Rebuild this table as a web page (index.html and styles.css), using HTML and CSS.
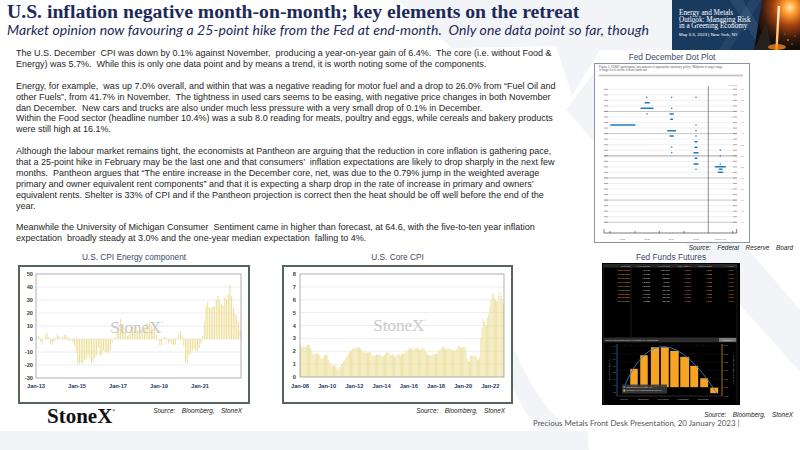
FILE: index.html
```html
<!DOCTYPE html>
<html lang="en">
<head>
<meta charset="utf-8">
<title>U.S. inflation negative month-on-month</title>
<link rel="stylesheet" href="styles.css">
</head>
<body>
<div class="slide">
  <svg class="bg" width="800" height="450" viewBox="0 0 800 450" aria-hidden="true">
    <g class="bg-shape">
      <polygon points="398,0 672,0 672,50 600,50 572,96 556,46 452,48"/>
      <polygon points="566,110 596,70 800,310 800,372"/>
      <path d="M0 431 H588 V450 H0 Z"/>
      <path d="M500 300 C512 362 542 412 590 450 L556 450 C516 410 496 360 490 300 Z"/>
    </g>
  </svg>

  <header class="top">
    <div class="titles">
      <h1 class="title">U.S. inflation negative month-on-month; key elements on the retreat</h1>
      <p class="subtitle">Market opinion now favouring a 25-point hike from the Fed at end-month.&nbsp; Only one data point so far, though</p>
    </div>
    <div class="banner">
      <div class="banner-text">
        <p class="banner-head">Energy and Metals<br>Outlook: Managing Risk<br>in a Greening Economy</p>
        <p class="banner-date">May 3-5, 2023 | New York, NY</p>
      </div>
      <svg class="banner-art" width="48" height="50" viewBox="0 0 48 50" aria-hidden="true">
        <defs>
          <radialGradient id="fire" cx="0.78" cy="0.15" r="0.8">
            <stop offset="0" stop-color="#ffe6a8"/>
            <stop offset="0.18" stop-color="#ff9c30"/>
            <stop offset="0.45" stop-color="#a5420f"/>
            <stop offset="0.75" stop-color="#3b1c10"/>
            <stop offset="1" stop-color="#140c09"/>
          </radialGradient>
          <linearGradient id="pour" x1="0" y1="0" x2="0" y2="1">
            <stop offset="0" stop-color="#fff7dc"/>
            <stop offset="1" stop-color="#ffb040"/>
          </linearGradient>
        </defs>
        <polygon points="10,0 48,0 48,50 2,50" fill="url(#fire)"/>
        <polygon points="2,50 14,22 20,50" fill="#2a2522" opacity="0.8"/>
        <path d="M27 6 C26 20 25.5 32 24.5 50" stroke="url(#pour)" stroke-width="2.4" fill="none"/>
        <ellipse cx="25" cy="47" rx="9" ry="3" fill="#ff8c22" opacity="0.75"/>
        <circle cx="36" cy="40" r="0.8" fill="#ffb347"/>
        <circle cx="40" cy="44" r="0.6" fill="#ffcf70"/>
        <circle cx="33" cy="34" r="0.5" fill="#ff9a30"/>
        <circle cx="43" cy="36" r="0.6" fill="#ff8a20"/>
      </svg>
    </div>
  </header>

  <section class="middle">
    <div class="article">
<p class="para">The U.S. December  CPI was down by 0.1% against November,  producing a year-on-year gain of 6.4%.  The core (i.e. without Food &amp;
Energy) was 5.7%.  While this is only one data point and by means a trend, it is worth noting some of the components.</p>
<p class="para">Energy, for example,  was up 7.0% overall, and within that was a negative reading for motor fuel and a drop to 26.0% from “Fuel Oil and
other Fuels”, from 41.7% in November.  The tightness in used cars seems to be easing, with negative price changes in both November
dan December.  New cars and trucks are also under much less pressure with a very small drop of 0.1% in December.
Within the Food sector (headline number 10.4%) was a sub 8.0 reading for meats, poultry and eggs, while cereals and bakery products
were still high at 16.1%.</p>
<p class="para">Although the labour market remains tight, the economists at Pantheon are arguing that the reduction in core inflation is gathering pace,
that a 25-point hike in February may be the last one and that consumers’  inflation expectations are likely to drop sharply in the next few
months.  Pantheon argues that “The entire increase in the December core, net, was due to the 0.79% jump in the weighted average
primary and owner equivalent rent components” and that it is expecting a sharp drop in the rate of increase in primary and owners’
equivalent rents. Shelter is 33% of CPI and if the Pantheon projection is correct then the heat should be off well before the end of the
year.</p>
<p class="para">Meanwhile the University of Michigan Consumer  Sentiment came in higher than forecast, at 64.6, with the five-to-ten year inflation
expectation  broadly steady at 3.0% and the one-year median expectation  falling to 4%.</p>
    </div>

    <aside class="side">
      <h2 class="fig-title side-title">Fed December Dot Plot</h2>
      <div class="dot-box">
        <svg width="154" height="178" viewBox="595 64 154 178" aria-hidden="true">
          <text class="cap" x="599" y="67.6">Figure 2.  FOMC participants’ assessments of appropriate monetary policy:  Midpoint of target range</text>
          <text class="cap" x="599" y="71.4">or target level for the federal funds rate</text>
          <rect x="599" y="74.6" width="144" height="1.8" fill="#c4c4c4"/>
          <text class="cap-s" x="737" y="85.5" text-anchor="end">Percent</text>
          <g id="dot-grid"></g>
          <line class="vline" x1="708.3" x2="708.3" y1="86" y2="233"/>
          <line class="axis" x1="604" x2="736.7" y1="233" y2="233"/>
          <g class="axis">
            <line x1="604" x2="604" y1="229" y2="233"/>
            <line x1="610" x2="610" y1="231" y2="233"/>
            <line x1="635" x2="635" y1="231" y2="233"/>
            <line x1="659.3" x2="659.3" y1="231" y2="233"/>
            <line x1="684" x2="684" y1="231" y2="233"/>
            <line x1="732.7" x2="732.7" y1="231" y2="233"/>
            <line x1="736.7" x2="736.7" y1="229" y2="233"/>
          </g>
          <g class="cap-s" text-anchor="middle">
            <text x="622.5" y="240">2022</text>
            <text x="647.2" y="240">2023</text>
            <text x="671.7" y="240">2024</text>
            <text x="696.2" y="240">2025</text>
            <text x="720.5" y="240">Longer run</text>
          </g>
          <g class="dots">
            <rect x="645.9" y="96.5" width="1.6" height="1.6" rx="0.8"/>
            <rect x="670.9" y="96.5" width="1.6" height="1.6" rx="0.8"/>
            <rect x="695.2" y="96.5" width="1.6" height="1.6" rx="0.8"/>
            <rect x="644.3" y="101.9" width="5.7" height="1.6" rx="0.8"/>
            <rect x="640.3" y="107.5" width="13.4" height="1.6" rx="0.8"/>
            <rect x="670.9" y="107.5" width="1.6" height="1.6" rx="0.8"/>
            <rect x="646.2" y="113.2" width="1.6" height="1.6" rx="0.8"/>
            <rect x="669.3" y="113.2" width="4.7" height="1.6" rx="0.8"/>
            <rect x="670" y="118.5" width="3.3" height="1.6" rx="0.8"/>
            <rect x="610" y="124.2" width="25.7" height="1.6" rx="0.8"/>
            <rect x="695.2" y="124.2" width="1.6" height="1.6" rx="0.8"/>
            <rect x="667" y="129.9" width="9.3" height="1.6" rx="0.8"/>
            <rect x="695.2" y="129.9" width="1.6" height="1.6" rx="0.8"/>
            <rect x="669.3" y="135.2" width="4.7" height="1.6" rx="0.8"/>
            <rect x="695.2" y="135.2" width="1.6" height="1.6" rx="0.8"/>
            <rect x="694.3" y="140.9" width="3.4" height="1.6" rx="0.8"/>
            <rect x="670.9" y="146.5" width="1.6" height="1.6" rx="0.8"/>
            <rect x="694.3" y="146.5" width="3.4" height="1.6" rx="0.8"/>
            <rect x="719.5" y="149.2" width="1.6" height="1.6" rx="0.8"/>
            <rect x="670.9" y="151.9" width="1.6" height="1.6" rx="0.8"/>
            <rect x="693.3" y="151.9" width="5.4" height="1.6" rx="0.8"/>
            <rect x="719.5" y="155.2" width="1.6" height="1.6" rx="0.8"/>
            <rect x="694.3" y="157.5" width="3.4" height="1.6" rx="0.8"/>
            <rect x="693.3" y="163.2" width="5.4" height="1.6" rx="0.8"/>
            <rect x="719.5" y="163.2" width="1.6" height="1.6" rx="0.8"/>
            <rect x="714.7" y="165.9" width="11.3" height="1.6" rx="0.8"/>
            <rect x="695.2" y="168.5" width="1.6" height="1.6" rx="0.8"/>
            <rect x="718.7" y="168.5" width="4" height="1.6" rx="0.8"/>
            <rect x="717.7" y="171.5" width="5.6" height="1.6" rx="0.8"/>
          </g>
        </svg>
      </div>
      <p class="source">Source:  Federal  Reserve  Board</p>
    </aside>
  </section>

  <section class="charts">
    <figure class="chart chart-energy">
      <figcaption class="fig-title">U.S. CPI Energy component</figcaption>
      <div class="chart-box">
        <svg width="228" height="135" viewBox="20 267 228 135" aria-hidden="true">
          <g class="grid">
            <line x1="36" x2="241" y1="287" y2="287"/>
            <line x1="36" x2="241" y1="300" y2="300"/>
            <line x1="36" x2="241" y1="313" y2="313"/>
            <line x1="36" x2="241" y1="326" y2="326"/>
            <line x1="36" x2="241" y1="339" y2="339"/>
            <line x1="36" x2="241" y1="352" y2="352"/>
            <line x1="36" x2="241" y1="365" y2="365"/>
          </g>
          <g id="energy-bars" class="bars-energy"></g>
          <rect class="plot" x="36" y="274" width="205" height="104"/>
          <text class="wm" x="137" y="333" text-anchor="middle">StoneX<tspan class="wm-r" dy="-9">®</tspan></text>
          <g class="ay" text-anchor="end">
            <text x="33" y="276">50</text>
            <text x="33" y="289">40</text>
            <text x="33" y="302">30</text>
            <text x="33" y="315">20</text>
            <text x="33" y="328">10</text>
            <text x="33" y="341">0</text>
            <text x="33" y="354">-10</text>
            <text x="33" y="367">-20</text>
            <text x="33" y="380">-30</text>
          </g>
          <g class="ax" text-anchor="middle">
            <text x="36" y="387.5">Jan-13</text>
            <text x="77" y="387.5">Jan-15</text>
            <text x="118" y="387.5">Jan-17</text>
            <text x="159" y="387.5">Jan-19</text>
            <text x="200" y="387.5">Jan-21</text>
          </g>
        </svg>
      </div>
      <div class="chart-foot">
        <span class="logo">StoneX<sup>®</sup></span>
        <span class="source">Source:  Bloomberg,  StoneX</span>
      </div>
    </figure>

    <figure class="chart chart-core">
      <figcaption class="fig-title">U.S. Core CPI</figcaption>
      <div class="chart-box">
        <svg width="227" height="135" viewBox="284 267 227 135" aria-hidden="true">
          <g class="grid">
            <line x1="300" x2="504" y1="364.1" y2="364.1"/>
            <line x1="300" x2="504" y1="351.25" y2="351.25"/>
            <line x1="300" x2="504" y1="338.4" y2="338.4"/>
            <line x1="300" x2="504" y1="325.5" y2="325.5"/>
            <line x1="300" x2="504" y1="312.6" y2="312.6"/>
            <line x1="300" x2="504" y1="299.75" y2="299.75"/>
            <line x1="300" x2="504" y1="286.9" y2="286.9"/>
          </g>
          <g id="core-bars" class="bars-core"></g>
          <rect class="plot" x="300" y="274" width="204" height="103"/>
          <text class="wm" x="400" y="331" text-anchor="middle">StoneX<tspan class="wm-r" dy="-9">®</tspan></text>
          <g class="ay" text-anchor="end">
            <text x="296" y="276">8</text>
            <text x="296" y="288.9">7</text>
            <text x="296" y="301.75">6</text>
            <text x="296" y="314.6">5</text>
            <text x="296" y="327.5">4</text>
            <text x="296" y="340.4">3</text>
            <text x="296" y="353.25">2</text>
            <text x="296" y="366.1">1</text>
            <text x="296" y="379">0</text>
          </g>
          <g class="ax" text-anchor="middle">
            <text x="300" y="387.5">Jan-08</text>
            <text x="327.2" y="387.5">Jan-10</text>
            <text x="354.4" y="387.5">Jan-12</text>
            <text x="381.6" y="387.5">Jan-14</text>
            <text x="408.8" y="387.5">Jan-16</text>
            <text x="436" y="387.5">Jan-18</text>
            <text x="463.2" y="387.5">Jan-20</text>
            <text x="490.4" y="387.5">Jan-22</text>
          </g>
        </svg>
      </div>
      <p class="source">Source:  Bloomberg,  StoneX</p>
    </figure>

    <figure class="side fed">
      <figcaption class="fig-title fed-title">Fed Funds Futures</figcaption>
      <div class="fed-box">
        <svg width="138" height="142" viewBox="602 263 138 142" aria-hidden="true">
          <rect x="602" y="263" width="138" height="142" fill="#000"/>
          <rect x="603.5" y="264" width="133.5" height="3.6" fill="#262626"/>
          <g class="ft fh" text-anchor="end">
            <text x="630" y="266.7">Meeting</text>
            <text x="650" y="266.7">#Hikes/Cuts</text>
            <text x="670" y="266.7">%Hike/Cut</text>
            <text x="691" y="266.7">Imp. Rate Δ</text>
            <text x="712" y="266.7">Implied Rate</text>
            <text x="734" y="266.7">A.R.M.</text>
          </g>
          <g id="fed-table" class="ft" text-anchor="end"></g>
          <line class="fl" x1="631" x2="631" y1="264" y2="337"/>
          <line class="fl" x1="737" x2="737" y1="264" y2="404"/>
          <line class="fl" x1="603.5" x2="603.5" y1="264" y2="404"/>
          <rect x="603.5" y="337.5" width="133.5" height="4.8" fill="#2e2e2e"/>
          <text class="ft fw" x="605" y="340.8">Implied Overnight Rate &amp; Number of Hikes/Cuts</text>
          <rect x="719" y="338" width="17" height="3.8" fill="#7a7a7a"/>
          <text class="ft fw" x="727.5" y="340.8" text-anchor="middle">Modeller</text>
          <g class="fgrid">
            <line x1="617" x2="722" y1="345.3" y2="345.3"/>
            <line x1="617" x2="722" y1="353.7" y2="353.7"/>
            <line x1="617" x2="722" y1="362" y2="362"/>
            <line x1="617" x2="722" y1="370.5" y2="370.5"/>
            <line x1="617" x2="722" y1="378.9" y2="378.9"/>
            <line x1="617" x2="722" y1="387.3" y2="387.3"/>
          </g>
          <g class="fbars">
            <rect x="630" y="368.7" width="8" height="18.6"/>
            <rect x="640" y="355" width="8" height="32.3"/>
            <rect x="650.7" y="347" width="8.6" height="40.3"/>
            <rect x="660.7" y="347" width="8.3" height="40.3"/>
            <rect x="670" y="350.7" width="9" height="36.6"/>
            <rect x="680" y="356.7" width="9.3" height="30.6"/>
            <rect x="690" y="365.7" width="8.3" height="21.6"/>
            <rect x="700" y="378" width="8.3" height="9.3"/>
            <rect x="710" y="387.3" width="8.3" height="6"/>
          </g>
          <line x1="617" x2="617" y1="344" y2="396" stroke="#2f74d0" stroke-width="0.7"/>
          <line x1="722" x2="722" y1="344" y2="396" stroke="#f0a024" stroke-width="0.7"/>
          <line x1="617" x2="722" y1="396" y2="396" stroke="#555" stroke-width="0.5"/>
          <path d="M624.3 386.7 Q659.5 303.5 717 393.5" fill="none" stroke="#2f7fd8" stroke-width="0.9"/>
          <rect x="622" y="384.5" width="45" height="9" fill="#3a3a3a" opacity="0.9"/>
          <rect x="623.3" y="386" width="2" height="2" fill="#2f7fd8"/>
          <rect x="623.3" y="389.6" width="2" height="2" fill="#f7a425"/>
          <text class="ft fw" x="626.5" y="387.8">Implied Policy Rate (%)</text>
          <text class="ft fw" x="626.5" y="391.4">Number of Hikes/Cuts Priced In</text>
          <g class="ft fg" text-anchor="end">
            <text x="615.5" y="347.3">4.9</text>
            <text x="615.5" y="353.8">4.8</text>
            <text x="615.5" y="360.3">4.7</text>
            <text x="615.5" y="366.8">4.6</text>
            <text x="615.5" y="373.3">4.5</text>
            <text x="615.5" y="379.8">4.4</text>
            <text x="615.5" y="386.3">4.3</text>
            <text x="615.5" y="392.8">4.2</text>
          </g>
          <g class="ft fg">
            <text x="723.6" y="346.2">2.50</text>
            <text x="723.6" y="354.6">2.00</text>
            <text x="723.6" y="362.9">1.50</text>
            <text x="723.6" y="371.4">1.00</text>
            <text x="723.6" y="379.8">0.50</text>
            <text x="723.6" y="388.2">0.00</text>
            <text x="723.6" y="396.6">-0.50</text>
          </g>
          <text class="ft fg" transform="translate(610.3 370) rotate(-90)" text-anchor="middle">Implied Policy Rate (%)</text>
          <text class="ft fg" transform="translate(732.6 370) rotate(90)" text-anchor="middle">Number of Hikes/Cuts Priced In</text>
          <g class="ft fg" text-anchor="middle">
            <text x="624" y="400.3">Current</text>
            <text x="643" y="400.3">03/22/2023</text>
            <text x="663" y="400.3">06/14/2023</text>
            <text x="683" y="400.3">09/20/2023</text>
            <text x="703" y="400.3">12/13/2023</text>
          </g>
        </svg>
      </div>
      <p class="source fed-source">Source:  Bloomberg,  StoneX</p>
      <p class="footer-note">Precious Metals Front Desk Presentation, 20 January 2023 |</p>
    </figure>
  </section>
</div>
<script src="script.js"></script>
</body>
</html>
```

FILE: styles.css
```css
* { box-sizing: border-box; }

html, body {
  margin: 0;
  padding: 0;
}

body {
  width: 800px;
  height: 450px;
  overflow: hidden;
  background: #ffffff;
  font-family: "Liberation Sans", Arial, sans-serif;
}

.slide {
  position: relative;
  width: 800px;
  height: 450px;
  overflow: hidden;
  display: flex;
  flex-direction: column;
}

.bg {
  position: absolute;
  left: 0;
  top: 0;
  z-index: 0;
}

.bg-shape { fill: #f3f4f7; }

.top, .middle, .charts {
  position: relative;
  z-index: 1;
}

/* ---------- header ---------- */
.top {
  display: flex;
  height: 48px;
}

.titles {
  flex: 1;
  min-width: 0;
  padding: 1px 0 0 7px;
}

.title {
  margin: 0;
  font: bold 19.7px/21px "Liberation Serif", "Times New Roman", serif;
  color: #1c2a5a;
  white-space: nowrap;
}

.subtitle {
  margin: 0;
  font: italic 14px/15px Lato, "Noto Sans", sans-serif;
  letter-spacing: 0.08px;
  color: #1c2a5a;
  white-space: nowrap;
}

.banner {
  flex: none;
  width: 128px;
  height: 50px;
  display: flex;
  background:
    linear-gradient(58deg, transparent 56%, rgba(255,255,255,0.07) 56%, rgba(255,255,255,0.07) 64%, transparent 64%),
    linear-gradient(-58deg, transparent 44%, rgba(255,255,255,0.05) 44%, rgba(255,255,255,0.05) 51%, transparent 51%),
    #183a5f;
}

.banner-text {
  flex: 1;
  min-width: 0;
  padding: 10px 0 0 7px;
  color: #ffffff;
  white-space: nowrap;
}

.banner-head {
  margin: 0;
  font: 7.2px/6.5px "Liberation Serif", "Times New Roman", serif;
}

.banner-date {
  margin: 2.7px 0 0;
  font: 4.4px/5px "Liberation Sans", Arial, sans-serif;
}

.banner-art {
  flex: none;
  display: block;
}

/* ---------- middle ---------- */
.middle {
  display: flex;
  height: 204px;
}

.article {
  width: 570px;
  padding-left: 16px;
}

.para {
  margin: 0 0 10.9px;
  font-size: 9px;
  line-height: 10.9px;
  color: #262626;
  white-space: pre;
}

.para:last-child { margin-bottom: 0; }

.side {
  width: 203px;
  margin: 0 7px 0 auto;
  padding-top: 4px;
}

.fig-title {
  margin: 0;
  font: normal 8.3px/10px "Liberation Sans", Arial, sans-serif;
  color: #3b4768;
  text-align: center;
}

.side-title {
  width: 156px;
  margin-left: 4px;
}

.dot-box {
  width: 156px;
  height: 180px;
  margin: 1px 0 0 4px;
  border: 1px solid #8a94ab;
  background: #ffffff;
}

.dot-box svg, .chart-box svg, .fed-box svg { display: block; }

.source {
  margin: 0;
  font: italic 6.4px/9px "Liberation Sans", Arial, sans-serif;
  color: #222222;
  text-align: right;
  word-spacing: 1.5px;
  white-space: pre;
}

/* dot plot svg */
.cap { font: 3.1px "Liberation Serif", serif; fill: #555555; }
.cap-s { font: 2.4px "Liberation Sans", sans-serif; fill: #777777; }
.g-minor { stroke: #d6d6d6; stroke-width: 0.4; }
.g-major { stroke: #8a8a8a; stroke-width: 0.5; }
.g-band { stroke: #b5b5b5; stroke-width: 1.3; }
.g-tick { stroke: #555555; stroke-width: 0.45; }
.g-lab { font: 2.2px "Liberation Sans", sans-serif; fill: #777777; }
.vline { stroke: #333333; stroke-width: 0.55; }
.axis line, line.axis { stroke: #222222; stroke-width: 0.6; }
.dots rect { fill: #1f7bc0; }

/* ---------- charts row ---------- */
.charts {
  display: flex;
  padding: 0 0 0 18px;
}

figure { margin: 0; }

.chart-energy { width: 232px; }

.chart-core {
  width: 231px;
  margin-left: 32px;
}

.chart .fig-title { margin-bottom: 3px; }

.chart-box {
  height: 139px;
  border: 2px solid #56655b;
  background: #ffffff;
}

.chart .source {
  margin-top: 1.5px;
  padding-right: 8px;
}

.chart-foot {
  display: flex;
  justify-content: space-between;
  align-items: flex-start;
}

.logo {
  margin: 2px 0 0 29px;
  font: bold 21px/20px "Liberation Serif", "Times New Roman", serif;
  color: #111111;
}

.logo sup {
  font-size: 4px;
  vertical-align: 11px;
  line-height: 0;
}

.grid line { stroke: #dadada; stroke-width: 0.5; }
.plot { fill: none; stroke: #8f8f8f; stroke-width: 0.7; }
.bars-energy rect { fill: #ecde96; }
.bars-core rect { fill: #eee1a0; }
.wm { font: 17px "Liberation Serif", serif; fill: #c9c9c9; }
.wm-r { font-size: 3px; }
.ax { font: bold 5.7px "Liberation Sans", sans-serif; fill: #1f3864; }
.ay { font: bold 5.7px "Liberation Sans", sans-serif; fill: #404040; }

/* fed funds */
.fed { padding-top: 0; }

.fed-title {
  width: 138px;
  margin-left: 12px;
}

.fed-box {
  width: 138px;
  height: 142px;
  margin: 1px 0 0 12px;
  background: #000000;
}

.fed-source { margin-top: 4.5px; }

.footer-note {
  margin: 0 0 0 -57px;
  font: 7.9px/9px Lato, "Noto Sans", sans-serif;
  color: #555555;
  white-space: nowrap;
}

.ft { font: 2.5px "Liberation Sans", sans-serif; }
.fh { fill: #bdbdbd; }
.fw { fill: #dddddd; }
.fg { fill: #b8b8b8; font-size: 2.2px; }
.fl { stroke: #444444; stroke-width: 0.4; }
.fgrid line { stroke: #555555; stroke-width: 0.3; stroke-dasharray: 0.6 0.6; }
.fbars rect { fill: #f7a425; stroke: #000000; stroke-width: 0.5; }
.c1 { fill: #e89a35; }
.c2 { fill: #f2edd2; }
.c3 { fill: #efe2c4; }
.c4 { fill: #e9a44a; }
.c5 { fill: #f0b255; }
.c6 { fill: #d4742f; }
```

FILE: script.js
```js
(function () {
  var NS = 'http://www.w3.org/2000/svg';

  function el(tag, attrs, parent) {
    var e = document.createElementNS(NS, tag);
    for (var k in attrs) { e.setAttribute(k, attrs[k]); }
    parent.appendChild(e);
    return e;
  }

  var energy = [
    1.7, 2.3, -1.7, -4.3, -0.3, 3.2, 4.7, 1.0, -3.1, -4.8, -2.4, 0.5,
    3.3, 2.1, -0.5, 1.2, 3.4, 3.3, 1.6, -1.5, -0.5, -1.9, -4.8, -10.6,
    -19.6, -18.8, -18.3, -19.4, -16.3, -15.0, -12.6, -15.0, -18.4, -17.1, -14.7, -12.6,
    -6.5, -12.5, -12.6, -8.9, -10.1, -10.1, -11.0, -9.2, -2.9, 0.2, 1.1, 5.4,
    10.8, 15.2, 10.9, 9.3, 5.6, 2.3, 3.4, 6.4, 10.1, 6.4, 9.4, 6.9,
    5.5, 7.7, 7.0, 7.9, 11.7, 12.0, 12.1, 10.2, 4.8, 8.9, 3.1, -0.3,
    -4.8, -5.0, -0.4, 1.7, -0.6, -3.4, -2.0, -4.4, -4.8, -4.2, -0.6, 3.4,
    6.2, 2.8, -5.7, -17.7, -18.9, -12.6, -11.2, -9.0, -7.7, -9.2, -9.4, -7.0,
    -3.6, 2.4, 13.2, 25.1, 28.5, 24.5, 23.8, 25.0, 24.8, 30.0, 33.3, 29.3,
    27.0, 25.6, 32.0, 30.3, 34.6, 41.6, 32.9, 23.8, 19.8, 17.6, 13.1, 7.3
  ];

  var core = [
    2.5, 2.3, 2.4, 2.3, 2.3, 2.4, 2.5, 2.5, 2.5, 2.2, 2.0, 1.8,
    1.7, 1.8, 1.8, 1.9, 1.8, 1.7, 1.5, 1.4, 1.5, 1.7, 1.7, 1.8,
    1.6, 1.3, 1.1, 0.9, 0.9, 0.9, 0.9, 0.9, 0.8, 0.6, 0.8, 0.8,
    1.0, 1.1, 1.2, 1.3, 1.5, 1.6, 1.8, 2.0, 2.0, 2.1, 2.2, 2.2,
    2.3, 2.2, 2.3, 2.3, 2.3, 2.2, 2.1, 1.9, 2.0, 2.0, 1.9, 1.9,
    1.9, 2.0, 1.9, 1.7, 1.7, 1.6, 1.7, 1.8, 1.7, 1.7, 1.7, 1.7,
    1.6, 1.6, 1.7, 1.8, 2.0, 1.9, 1.9, 1.7, 1.7, 1.8, 1.7, 1.6,
    1.6, 1.7, 1.8, 1.8, 1.7, 1.8, 1.8, 1.8, 1.9, 1.9, 2.0, 2.1,
    2.2, 2.3, 2.2, 2.1, 2.2, 2.2, 2.2, 2.3, 2.2, 2.1, 2.1, 2.2,
    2.3, 2.2, 2.0, 1.9, 1.7, 1.7, 1.7, 1.7, 1.7, 1.8, 1.7, 1.8,
    1.8, 1.8, 2.1, 2.1, 2.2, 2.3, 2.4, 2.2, 2.2, 2.1, 2.2, 2.2,
    2.2, 2.1, 2.0, 2.1, 2.0, 2.1, 2.2, 2.4, 2.4, 2.3, 2.3, 2.3,
    2.3, 2.4, 2.1, 1.4, 1.2, 1.2, 1.6, 1.7, 1.7, 1.6, 1.6, 1.6,
    1.4, 1.3, 1.6, 3.0, 3.8, 4.5, 4.3, 4.0, 4.0, 4.6, 4.9, 5.5,
    6.0, 6.4, 6.5, 6.2, 6.0, 5.9, 5.9, 6.3, 6.6, 6.3, 6.0, 5.7
  ];

  function bars(id, data, x0, step, w, zeroY, scale) {
    var g = document.getElementById(id);
    if (!g) { return; }
    data.forEach(function (v, i) {
      var h = Math.abs(v) * scale;
      el('rect', {
        x: (x0 + i * step + (step - w) / 2).toFixed(2),
        y: (v >= 0 ? zeroY - h : zeroY).toFixed(2),
        width: w,
        height: Math.max(h, 0.01).toFixed(2)
      }, g);
    });
  }

  bars('energy-bars', energy, 36, 205 / 120, 1.0, 339, 1.3);
  bars('core-bars', core, 300, 204 / 180, 0.85, 377, 12.875);

  var grid = document.getElementById('dot-grid');
  if (grid) {
    for (var k = 0; k < 25; k++) {
      var y = 89.3 + k * 5.54;
      var cls = 'g-minor';
      if (k === 12) { cls = 'g-band'; }
      else if (k % 4 === 0 && k > 0) { cls = 'g-major'; }
      el('line', { x1: 604, x2: 737, y1: y, y2: y, 'class': cls }, grid);
      el('line', { x1: 604, x2: 608, y1: y, y2: y, 'class': 'g-tick' }, grid);
      el('line', { x1: 733, x2: 737, y1: y, y2: y, 'class': 'g-tick' }, grid);
      if (k % 2 === 0) {
        var t = el('text', { x: 741, y: (y + 0.8).toFixed(2), 'class': 'g-lab' }, grid);
        t.textContent = (6 - k * 0.25).toFixed(1);
      }
    }
  }

  var rows = [
    ['02/01/2023', '+1.040', '+104.0%', '+0.260', '4.589', '0.250'],
    ['03/22/2023', '+1.983', '+94.3%', '+0.496', '4.825', '0.250'],
    ['05/03/2023', '+2.336', '+35.3%', '+0.584', '4.913', '0.250'],
    ['06/14/2023', '+2.395', '+5.9%', '+0.599', '4.928', '0.250'],
    ['07/26/2023', '+2.173', '-22.2%', '+0.543', '4.872', '0.250'],
    ['09/20/2023', '+1.670', '-50.3%', '+0.418', '4.747', '0.250'],
    ['11/01/2023', '+1.197', '-47.4%', '+0.299', '4.628', '0.250'],
    ['12/13/2023', '+0.445', '-75.1%', '+0.111', '4.440', '0.250'],
    ['01/31/2024', '-0.358', '-80.3%', '-0.089', '4.240', '0.250']
  ];
  var colX = [630, 650, 670, 691, 712, 734];
  var table = document.getElementById('fed-table');
  if (table) {
    rows.forEach(function (r, i) {
      r.forEach(function (cell, j) {
        var t = el('text', { x: colX[j], y: (270.8 + i * 3.95).toFixed(2), 'class': 'c' + (j + 1) }, table);
        t.textContent = cell;
      });
    });
  }
})();
```
